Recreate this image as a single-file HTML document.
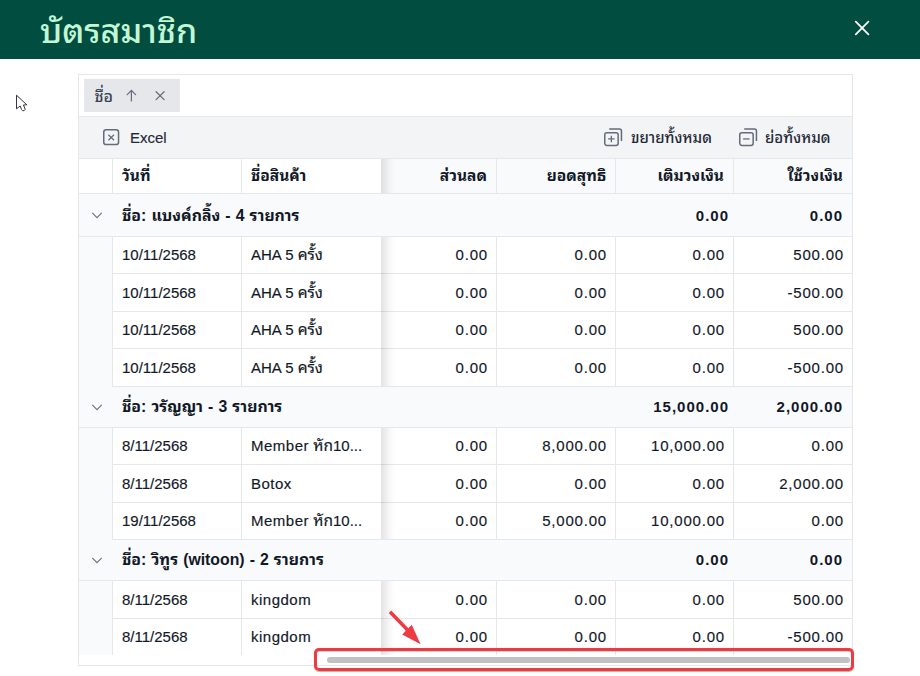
<!DOCTYPE html>
<html lang="th">
<head>
<meta charset="utf-8">
<title>บัตรสมาชิก</title>
<style>
*{box-sizing:border-box;margin:0;padding:0}
html,body{width:920px;height:676px;overflow:hidden;background:#fff}
body{position:relative;font-family:"Liberation Sans","Noto Sans Thai Looped","Loma","Noto Sans Thai UI",sans-serif;color:#111827;font-size:15px}
.hdr{position:absolute;left:0;top:0;width:920px;height:59px;background:#014d40}
.title{position:absolute;left:40px;top:7px;font-size:34px;line-height:48px;color:#c3f7d4;white-space:nowrap;font-weight:500}
.close{position:absolute;left:853px;top:18.5px;width:18px;height:18px}
.cursor{position:absolute;left:14px;top:92px;width:16px;height:22px}
.card{position:absolute;left:78px;top:74px;width:775px;height:592px;border:1px solid #e5e7eb;background:#fff}
.chip{position:absolute;left:84px;top:79px;width:96px;height:33px;background:#e5e7eb;color:#374151}
.chip span{position:absolute;left:10.5px;top:6.5px;font-size:16px;line-height:22px;font-weight:500}
.chip svg{position:absolute}
.tb{position:absolute;left:79px;top:116px;width:773px;height:43px;background:#f3f4f6;border-top:1px solid #e5e7eb;border-bottom:1px solid #e5e7eb;color:#1f2937}
.tb .t{position:absolute;top:9px;line-height:22px;font-size:15px;white-space:nowrap}
.tb .t.tt{font-size:15px;font-weight:500;top:10px;-webkit-text-stroke:0}
.tb svg{position:absolute}
.ind{position:absolute;left:79px;top:194px;width:33px;height:462px;background:#f9fafb}
.row{position:absolute;left:0;width:920px}
.c{position:absolute;top:0;height:100%;border-left:1px solid #e5e7eb;border-bottom:1px solid #e5e7eb;white-space:nowrap;overflow:hidden;font-size:15px;padding:0 9px;background:#fff}
.last .c{border-bottom:0}
.dr .c,.tb .t{-webkit-text-stroke:.15px currentColor}
.r{text-align:right}
.c.nb{border-left:0}
.n{letter-spacing:.8px;padding-right:8px}
.th{font-size:15.5px}
.ls{letter-spacing:.5px}
.hd .c{font-weight:bold;background:#f9fafb;font-size:15.5px}
.hd .c.f{background:#fff}
.grp{left:79px;width:773px;background:#f9fafb;border-bottom:1px solid #e5e7eb;font-weight:bold}
.grp .g{position:absolute;top:0;height:100%;white-space:nowrap;font-size:15px}
.grp .gl{font-size:15.8px;word-spacing:.7px}
.grp .gr{letter-spacing:1px;margin-right:-1px}
.chev{position:absolute;width:12px;height:8px}
.shadow{position:absolute;left:381px;width:14px;background:linear-gradient(to right,rgba(0,0,0,.11),rgba(0,0,0,.03) 60%,rgba(0,0,0,0))}
.hbar{position:absolute;left:79px;top:655px;width:773px;height:10px;background:#fff}
.red{position:absolute;left:314px;top:647.5px;width:539.5px;height:23.5px;border:3.5px solid #ee3a43;border-radius:5px;box-shadow:0 .8px .8px rgba(0,0,0,.3),inset 0 .8px .8px rgba(0,0,0,.25)}
.sb{position:absolute;left:327px;top:657px;width:523px;height:5.5px;border-radius:3px;background:#c1c1c1}
.arrow{position:absolute;left:380px;top:604px;width:60px;height:52px}
</style>
</head>
<body>
<div class="hdr"><div class="title">บัตรสมาชิก</div>
<svg class="close" viewBox="0 0 18 18"><path d="M2.8 2.7 L15.4 15.3 M15.4 2.7 L2.8 15.3" stroke="#fff" stroke-width="1.8" fill="none" stroke-linecap="round"/></svg>
</div>
<svg class="cursor" viewBox="14 92 16 22"><path d="M16.5 95.2 L16.5 108.8 L20.2 106 L21.6 109.6 Q22.6 111.4 24.2 110.6 Q25.6 109.8 24.8 108.2 L23.4 105 L26.8 104.8 Z" fill="#fff" stroke="#33343f" stroke-width="1" stroke-linejoin="round"/></svg>
<div class="card"></div>
<div class="chip"><span>ชื่อ</span>
<svg style="left:41px;top:10px;width:13px;height:13px" viewBox="125 89 13 13"><path d="M131.4 101 V90.4 M127.2 94.7 L131.4 90.4 L135.6 94.7" fill="none" stroke="#646b7c" stroke-width="1.2" stroke-linecap="round" stroke-linejoin="round"/></svg>
<svg style="left:70px;top:11px;width:12px;height:12px" viewBox="154 90 12 12"><path d="M156.1 91.7 L164.1 99.6 M164.1 91.7 L156.1 99.6" fill="none" stroke="#646b7c" stroke-width="1.2" stroke-linecap="round"/></svg>
</div>
<div class="tb">
<svg style="left:24px;top:12px;width:17px;height:17px" viewBox="0 0 17 17"><rect x="0.75" y="0.85" width="14.8" height="14.7" rx="2.4" fill="none" stroke="#646b7c" stroke-width="1.5"/><path d="M5.4 5.7 L11 11.2 M11 5.7 L5.4 11.2" stroke="#646b7c" stroke-width="1.2" fill="none"/></svg>
<div class="t" style="left:51px;top:10px">Excel</div>
<svg style="left:525px;top:11px;width:19px;height:19px" viewBox="0 0 19 19"><rect x="0.75" y="4.65" width="13.4" height="12.8" rx="2.1" fill="none" stroke="#646b7c" stroke-width="1.5"/><path d="M5.2 0.95 H15.4 Q17.45 0.95 17.45 3 V12.9" fill="none" stroke="#646b7c" stroke-width="1.5"/><path d="M4.1 10.95 H10.6 M7.35 7.7 V14.2" stroke="#646b7c" stroke-width="1.3" fill="none"/></svg>
<div class="t tt" style="left:552px">ขยายทั้งหมด</div>
<svg style="left:659.5px;top:11px;width:19px;height:19px" viewBox="0 0 19 19"><rect x="0.75" y="4.65" width="13.4" height="12.8" rx="2.1" fill="none" stroke="#646b7c" stroke-width="1.5"/><path d="M5.2 0.95 H15.4 Q17.45 0.95 17.45 3 V12.9" fill="none" stroke="#646b7c" stroke-width="1.5"/><path d="M4.1 10.95 H10.6" stroke="#646b7c" stroke-width="1.3" fill="none"/></svg>
<div class="t tt" style="left:686px">ย่อทั้งหมด</div>
</div>
<div class="ind"></div>
<div class="row hd" style="top:159px;height:35px;line-height:33px"><div class="c f" style="left:79px;width:33px;border-left:0"></div><div class="c f" style="left:112px;width:129px">วันที่</div><div class="c f" style="left:241px;width:140px">ชื่อสินค้า</div><div class="c r nb" style="left:381px;width:115px">ส่วนลด</div><div class="c r" style="left:496px;width:119px">ยอดสุทธิ</div><div class="c r" style="left:615px;width:118px">เติมวงเงิน</div><div class="c r" style="left:733px;width:119px">ใช้วงเงิน</div></div>
<div class="row grp" style="top:194px;height:43px;line-height:43px"><svg class="chev" viewBox="0 0 12 8" style="left:12px;top:17px"><path d="M1.5 2.2 L6 6.7 L10.5 2.2" fill="none" stroke="#646b7c" stroke-width="1.05" stroke-linecap="round" stroke-linejoin="round"/></svg><div class="g gl" style="left:43px">ชื่อ: แบงค์กลิ้ง - 4 รายการ</div><div class="g gr" style="right:124px">0.00</div><div class="g gr" style="right:10px">0.00</div></div>
<div class="row dr" style="top:237px;height:37px;line-height:36px"><div class="c f" style="left:112px;width:129px">10/11/2568</div><div class="c f nm" style="left:241px;width:140px">AHA 5 <span class="th">ครั้ง</span></div><div class="c r n nb" style="left:381px;width:115px">0.00</div><div class="c r n" style="left:496px;width:119px">0.00</div><div class="c r n" style="left:615px;width:118px">0.00</div><div class="c r n" style="left:733px;width:119px">500.00</div></div>
<div class="row dr" style="top:274px;height:38px;line-height:37px"><div class="c f" style="left:112px;width:129px">10/11/2568</div><div class="c f nm" style="left:241px;width:140px">AHA 5 <span class="th">ครั้ง</span></div><div class="c r n nb" style="left:381px;width:115px">0.00</div><div class="c r n" style="left:496px;width:119px">0.00</div><div class="c r n" style="left:615px;width:118px">0.00</div><div class="c r n" style="left:733px;width:119px">-500.00</div></div>
<div class="row dr" style="top:312px;height:37px;line-height:36px"><div class="c f" style="left:112px;width:129px">10/11/2568</div><div class="c f nm" style="left:241px;width:140px">AHA 5 <span class="th">ครั้ง</span></div><div class="c r n nb" style="left:381px;width:115px">0.00</div><div class="c r n" style="left:496px;width:119px">0.00</div><div class="c r n" style="left:615px;width:118px">0.00</div><div class="c r n" style="left:733px;width:119px">500.00</div></div>
<div class="row dr" style="top:349px;height:38px;line-height:37px"><div class="c f" style="left:112px;width:129px">10/11/2568</div><div class="c f nm" style="left:241px;width:140px">AHA 5 <span class="th">ครั้ง</span></div><div class="c r n nb" style="left:381px;width:115px">0.00</div><div class="c r n" style="left:496px;width:119px">0.00</div><div class="c r n" style="left:615px;width:118px">0.00</div><div class="c r n" style="left:733px;width:119px">-500.00</div></div>
<div class="row grp" style="top:387px;height:41px;line-height:39px"><svg class="chev" viewBox="0 0 12 8" style="left:12px;top:16px"><path d="M1.5 2.2 L6 6.7 L10.5 2.2" fill="none" stroke="#646b7c" stroke-width="1.05" stroke-linecap="round" stroke-linejoin="round"/></svg><div class="g gl" style="left:43px">ชื่อ: วรัญญา - 3 รายการ</div><div class="g gr" style="right:124px">15,000.00</div><div class="g gr" style="right:10px">2,000.00</div></div>
<div class="row dr" style="top:428px;height:37px;line-height:36px"><div class="c f" style="left:112px;width:129px">8/11/2568</div><div class="c f nm" style="left:241px;width:140px"><span class="ls">Member</span> <span class="th">หัก</span>10...</div><div class="c r n nb" style="left:381px;width:115px">0.00</div><div class="c r n" style="left:496px;width:119px">8,000.00</div><div class="c r n" style="left:615px;width:118px">10,000.00</div><div class="c r n" style="left:733px;width:119px">0.00</div></div>
<div class="row dr" style="top:465px;height:38px;line-height:37px"><div class="c f" style="left:112px;width:129px">8/11/2568</div><div class="c f nm" style="left:241px;width:140px"><span class="ls">Botox</span></div><div class="c r n nb" style="left:381px;width:115px">0.00</div><div class="c r n" style="left:496px;width:119px">0.00</div><div class="c r n" style="left:615px;width:118px">0.00</div><div class="c r n" style="left:733px;width:119px">2,000.00</div></div>
<div class="row dr" style="top:503px;height:37px;line-height:36px"><div class="c f" style="left:112px;width:129px">19/11/2568</div><div class="c f nm" style="left:241px;width:140px"><span class="ls">Member</span> <span class="th">หัก</span>10...</div><div class="c r n nb" style="left:381px;width:115px">0.00</div><div class="c r n" style="left:496px;width:119px">5,000.00</div><div class="c r n" style="left:615px;width:118px">10,000.00</div><div class="c r n" style="left:733px;width:119px">0.00</div></div>
<div class="row grp" style="top:540px;height:41px;line-height:39px"><svg class="chev" viewBox="0 0 12 8" style="left:12px;top:16px"><path d="M1.5 2.2 L6 6.7 L10.5 2.2" fill="none" stroke="#646b7c" stroke-width="1.05" stroke-linecap="round" stroke-linejoin="round"/></svg><div class="g gl" style="left:43px">ชื่อ: วิทูร (witoon) - 2 รายการ</div><div class="g gr" style="right:124px">0.00</div><div class="g gr" style="right:10px">0.00</div></div>
<div class="row dr" style="top:581px;height:38px;line-height:37px"><div class="c f" style="left:112px;width:129px">8/11/2568</div><div class="c f nm" style="left:241px;width:140px"><span class="ls">kingdom</span></div><div class="c r n nb" style="left:381px;width:115px">0.00</div><div class="c r n" style="left:496px;width:119px">0.00</div><div class="c r n" style="left:615px;width:118px">0.00</div><div class="c r n" style="left:733px;width:119px">500.00</div></div>
<div class="row dr last" style="top:619px;height:37px;line-height:36px"><div class="c f" style="left:112px;width:129px">8/11/2568</div><div class="c f nm" style="left:241px;width:140px"><span class="ls">kingdom</span></div><div class="c r n nb" style="left:381px;width:115px">0.00</div><div class="c r n" style="left:496px;width:119px">0.00</div><div class="c r n" style="left:615px;width:118px">0.00</div><div class="c r n" style="left:733px;width:119px">-500.00</div></div>
<div class="shadow" style="top:159px;height:34px"></div><div class="shadow" style="top:237px;height:149px"></div><div class="shadow" style="top:428px;height:111px"></div><div class="shadow" style="top:581px;height:75px"></div>
<div class="hbar"></div>
<div class="red"></div>
<div class="sb"></div>
<svg class="arrow" viewBox="380 604 60 52"><path d="M390 611.7 L408.5 631" stroke="#ee3a43" stroke-width="3.5" fill="none"/><path d="M420.6 644.2 L402.2 634.4 L411.7 624.8 Z" fill="#ee3a43"/></svg>
</body>
</html>
